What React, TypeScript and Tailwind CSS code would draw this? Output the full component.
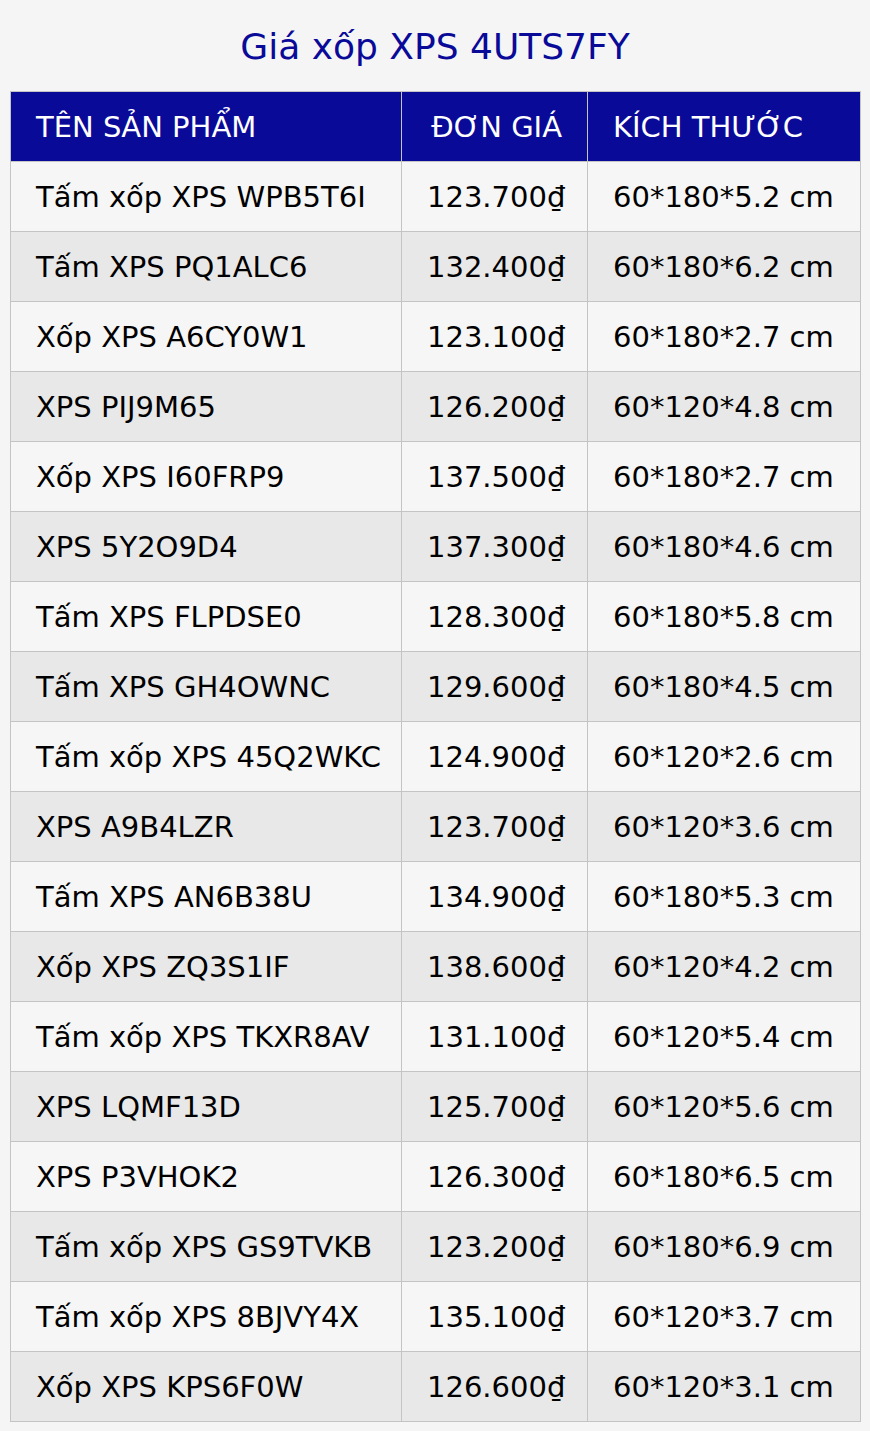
import React from 'react';

const rows: [string, string, string][] = [
  ['Tấm xốp XPS WPB5T6I', '123.700₫', '60*180*5.2 cm'],
  ['Tấm XPS PQ1ALC6', '132.400₫', '60*180*6.2 cm'],
  ['Xốp XPS A6CY0W1', '123.100₫', '60*180*2.7 cm'],
  ['XPS PIJ9M65', '126.200₫', '60*120*4.8 cm'],
  ['Xốp XPS I60FRP9', '137.500₫', '60*180*2.7 cm'],
  ['XPS 5Y2O9D4', '137.300₫', '60*180*4.6 cm'],
  ['Tấm XPS FLPDSE0', '128.300₫', '60*180*5.8 cm'],
  ['Tấm XPS GH4OWNC', '129.600₫', '60*180*4.5 cm'],
  ['Tấm xốp XPS 45Q2WKC', '124.900₫', '60*120*2.6 cm'],
  ['XPS A9B4LZR', '123.700₫', '60*120*3.6 cm'],
  ['Tấm XPS AN6B38U', '134.900₫', '60*180*5.3 cm'],
  ['Xốp XPS ZQ3S1IF', '138.600₫', '60*120*4.2 cm'],
  ['Tấm xốp XPS TKXR8AV', '131.100₫', '60*120*5.4 cm'],
  ['XPS LQMF13D', '125.700₫', '60*120*5.6 cm'],
  ['XPS P3VHOK2', '126.300₫', '60*180*6.5 cm'],
  ['Tấm xốp XPS GS9TVKB', '123.200₫', '60*180*6.9 cm'],
  ['Tấm xốp XPS 8BJVY4X', '135.100₫', '60*120*3.7 cm'],
  ['Xốp XPS KPS6F0W', '126.600₫', '60*120*3.1 cm'],
];

const App: React.FC = () => {
  return (
    <div className="min-h-[1431px] bg-[#f5f5f5] px-[10px] font-['DejaVu_Sans',sans-serif]">
      {/* Tiêu đề */}
      <h1 className="h-[91px] flex items-center justify-center text-[36px] text-[#0a0a99] pt-[2px]">
        Giá xốp XPS 4UTS7FY
      </h1>

      <table className="w-[850px] border-collapse table-fixed text-[29px] leading-[34px]">
        <colgroup>
          <col className="w-[391px]" />
          <col className="w-[186px]" />
          <col className="w-[273px]" />
        </colgroup>
        <thead>
          <tr className="h-[70px] bg-[#0a0a99] text-white">
            <th className="border border-[#c4c4c4] px-[25px] text-left font-normal whitespace-nowrap">TÊN SẢN PHẨM</th>
            <th className="border border-[#c4c4c4] px-[25px] text-right font-normal whitespace-nowrap">ĐƠN GIÁ</th>
            <th className="border border-[#c4c4c4] px-[25px] text-left font-normal whitespace-nowrap">KÍCH THƯỚC</th>
          </tr>
        </thead>
        <tbody>
          {rows.map(([name, price, size], i) => (
            <tr key={i} className={`h-[70px] text-black ${i % 2 === 0 ? 'bg-[#f6f6f6]' : 'bg-[#e8e8e8]'}`}>
              <td className="border border-[#c4c4c4] px-[25px] whitespace-nowrap">{name}</td>
              <td className="border border-[#c4c4c4] px-[25px] text-right whitespace-nowrap">{price}</td>
              <td className="border border-[#c4c4c4] px-[25px] whitespace-nowrap">{size}</td>
            </tr>
          ))}
        </tbody>
      </table>
    </div>
  );
};

export default App;
